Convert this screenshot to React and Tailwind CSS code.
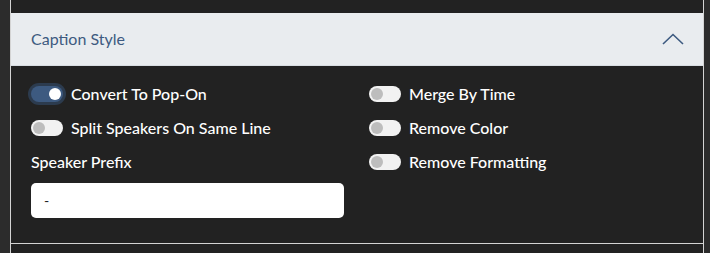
import React from "react";

function Toggle({ on }) {
  return (
    <span
      className={
        "relative inline-flex h-4 w-8 shrink-0 items-center rounded-full " +
        (on ? "bg-[#3d5a80] ring-[3px] ring-[#2c3b4e]" : "bg-[#f2f2f2]")
      }
    >
      <span
        className={
          "absolute h-3 w-3 rounded-full " +
          (on ? "right-[2px] bg-white" : "left-[2px] bg-[#bdbdbd]")
        }
      />
    </span>
  );
}

function Row({ on, label }) {
  return (
    <div className="flex h-[34px] items-center gap-2">
      <Toggle on={on} />
      <span className="text-[16px] font-medium text-white">{label}</span>
    </div>
  );
}

export default function App() {
  return (
    <div
      className="h-[253px] w-[710px] overflow-hidden bg-[#2c2c2c]"
      style={{ fontFamily: "Lato, 'Open Sans', sans-serif" }}
    >
      <div className="ml-[10px] h-full w-[694px] border-x border-[#d4d4d4] bg-[#222222] pt-[13px]">
        <div className="flex h-[53px] items-center justify-between border-b border-[#d8dde2] bg-[#e9ecef] pl-5 pr-5">
          <span className="text-[16px] text-[#3d5a80]">Caption Style</span>
          <svg width="22" height="12" viewBox="0 0 22 12" className="mr-[-1px]">
            <polyline
              points="1,11 11,1.5 21,11"
              fill="none"
              stroke="#3d5a80"
              strokeWidth="1.6"
            />
          </svg>
        </div>
        <div className="grid grid-cols-2 gap-x-6 border-b border-[#d4d4d4] px-5 pt-[11px] pb-[25px]">
          <div className="flex flex-col">
            <Row on label="Convert To Pop-On" />
            <Row label="Split Speakers On Same Line" />
            <div className="flex h-[34px] items-center text-[16px] font-medium text-white">Speaker Prefix</div>
            <div className="mt-[4px] flex h-[35px] w-[313px] items-center rounded-[5px] bg-white px-[13px] text-[14px] text-[#222]">
              -
            </div>
          </div>
          <div className="flex flex-col">
            <Row label="Merge By Time" />
            <Row label="Remove Color" />
            <Row label="Remove Formatting" />
          </div>
        </div>
      </div>
    </div>
  );
}
